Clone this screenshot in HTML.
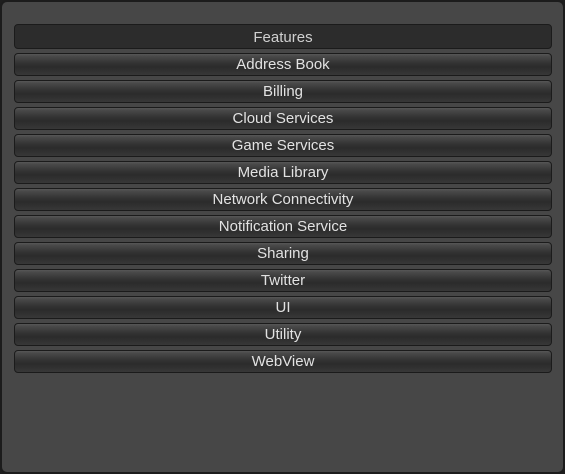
<!DOCTYPE html>
<html><head><meta charset="utf-8"><style>
html,body{margin:0;padding:0;background:#1e1e1e;width:565px;height:474px;overflow:hidden}
.panel{position:absolute;left:0;top:0;width:561px;height:470px;border:2px solid #1c1c1c;border-radius:7px;background:#474747}
.hdr,.btn{position:absolute;left:12px;width:538px;box-sizing:border-box;border:1px solid #1b1b1b;border-radius:4px;text-align:center;color:#e2e2e2;font-family:"Liberation Sans",sans-serif;font-size:15px}
.hdr{top:22px;height:25px;line-height:25px;background:#2c2c2c;color:#d0d0d0}
.btn{height:23px;line-height:22px;background:linear-gradient(#575757 0px,#4a4a4a 2px,#333 9px,#2b2b2b 13px,#363636 20px,#3e3e3e 23px)}
</style></head><body>
<div class="panel">
<div class="hdr">Features</div>
<div class="btn" style="top:51px">Address Book</div>
<div class="btn" style="top:78px">Billing</div>
<div class="btn" style="top:105px">Cloud Services</div>
<div class="btn" style="top:132px">Game Services</div>
<div class="btn" style="top:159px">Media Library</div>
<div class="btn" style="top:186px">Network Connectivity</div>
<div class="btn" style="top:213px">Notification Service</div>
<div class="btn" style="top:240px">Sharing</div>
<div class="btn" style="top:267px">Twitter</div>
<div class="btn" style="top:294px">UI</div>
<div class="btn" style="top:321px">Utility</div>
<div class="btn" style="top:348px">WebView</div>
</div>
</body></html>
